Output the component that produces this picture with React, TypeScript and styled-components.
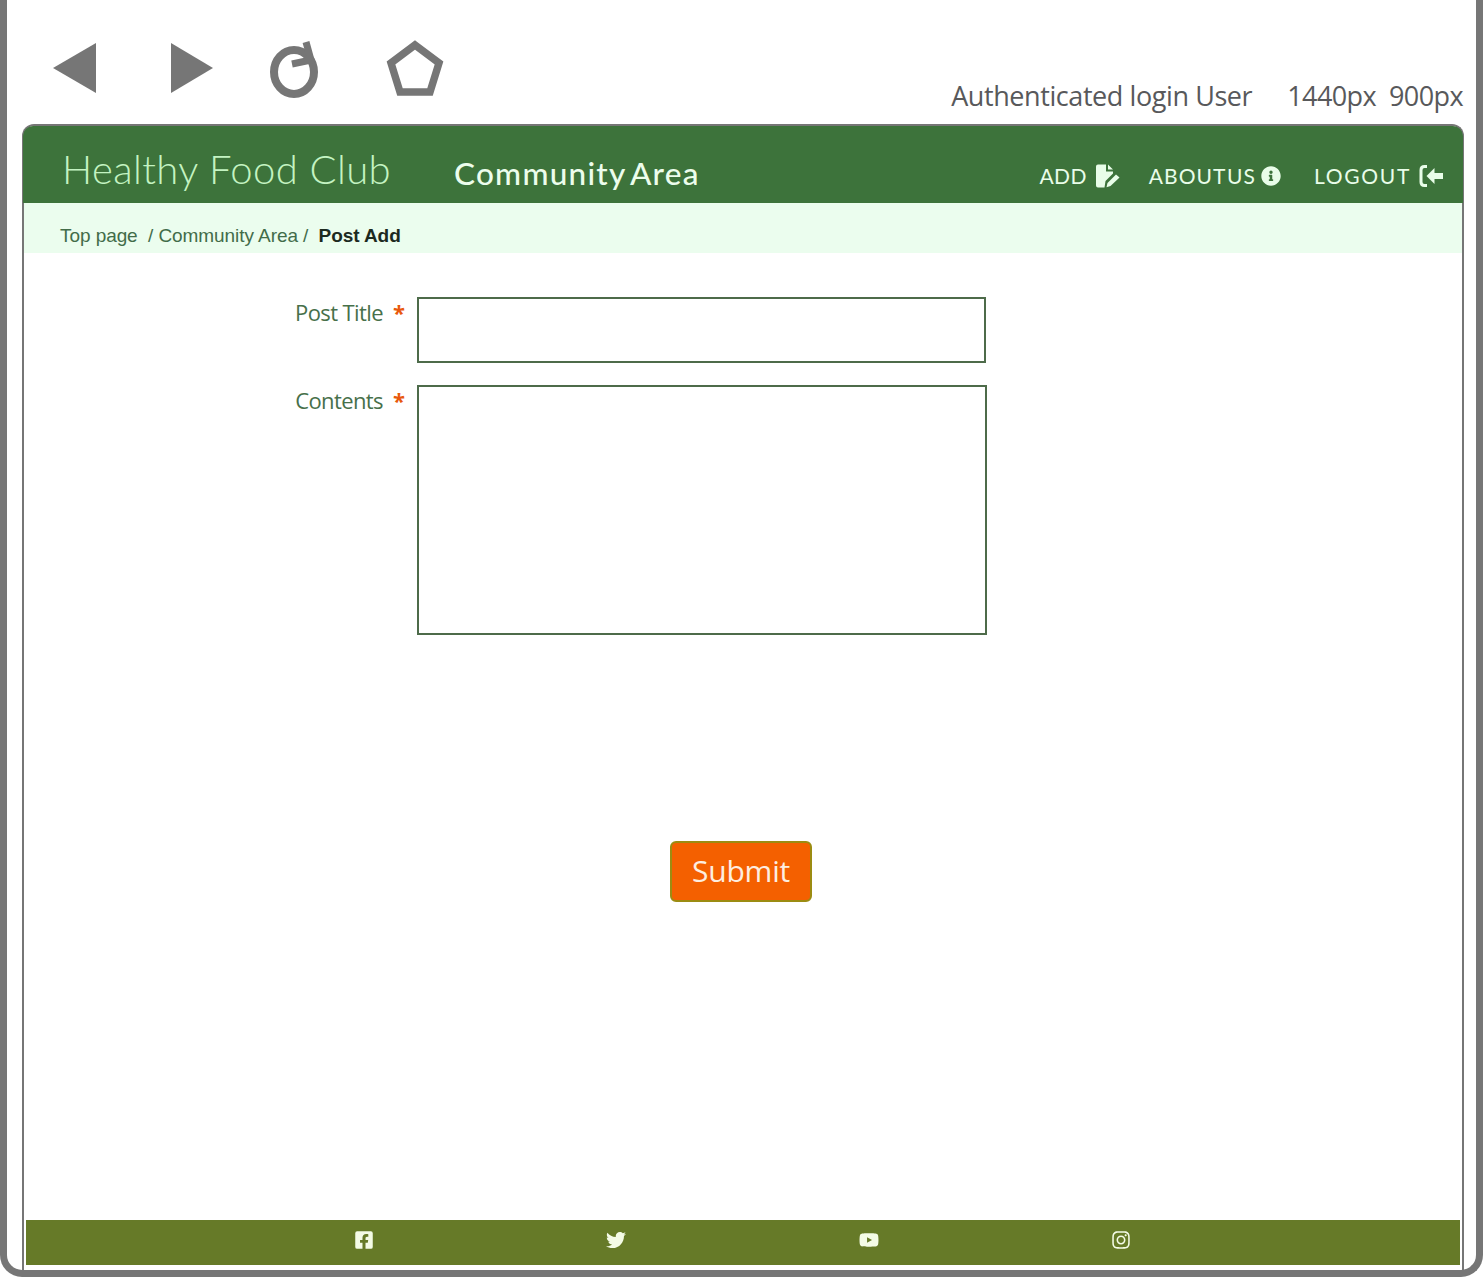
import React from "react";
import styled, { createGlobalStyle } from "styled-components";
import { FaFacebookSquare, FaTwitter, FaYoutube, FaInstagram, FaInfoCircle } from "react-icons/fa";

const Global = createGlobalStyle`
  html, body { margin: 0; padding: 0; background: #fff; }
  * { box-sizing: border-box; }
`;

const Page = styled.div`
  width: 1483px;
  height: 1286px;
  padding-bottom: 9px;
  background: #fff;
`;

const Frame = styled.div`
  height: 1277px;
  display: flex;
  flex-direction: column;
  border: 7px solid #767676;
  border-top: 0;
  border-radius: 0 0 22px 22px;
`;

const Toolbar = styled.div`
  height: 124px;
  display: flex;
  position: relative;
  align-items: flex-start;
`;

const ToolIcons = styled.svg`
  width: 460px;
  height: 110px;
  flex: none;
`;

const Status = styled.div`
  margin-left: auto;
  margin-right: 13px;
  margin-top: 77px;
  display: flex;
  gap: 35px;
  font: 400 27px/38px "Open Sans", sans-serif;
  letter-spacing: -0.42px;
  color: #58595b;
`;

const Sizes = styled.span`
  display: inline-flex;
  gap: 13px;
  letter-spacing: -0.6px;
`;

const Panel = styled.div`
  flex: 1;
  min-height: 0;
  margin: 0 12px 0 15px;
  display: flex;
  flex-direction: column;
  border: 2px solid #767676;
  border-bottom: 0;
  border-radius: 12px 12px 0 0;
`;

const Header = styled.header`
  height: 77px;
  flex: none;
  background: #3d733b;
  border-radius: 10px 10px 0 0;
  margin: 0 -1px;
  display: flex;
  align-items: flex-start;
  padding-left: 39px;
`;

const Brand = styled.div`
  width: 392px;
  margin-top: 18px;
  font: 300 40px/50px "Lato", sans-serif;
  letter-spacing: 0.4px;
  color: #c4f3c2;
  white-space: nowrap;
`;

const Section = styled.div`
  margin-top: 25px;
  font: 500 31.5px/44px "Lato", sans-serif;
  letter-spacing: 1.25px;
  word-spacing: -4px;
  color: #ecfdec;
  white-space: nowrap;
`;

const Nav = styled.nav`
  margin-left: auto;
  margin-right: 20px;
  margin-top: 37px;
  display: flex;
  align-items: center;
`;

const NavItem = styled.a<{ $gap: number; $track: number; $before: number }>`
  display: flex;
  align-items: center;
  gap: ${(p) => p.$gap}px;
  margin-left: ${(p) => p.$before}px;
  font: 400 21px/26px "Lato", sans-serif;
  letter-spacing: ${(p) => p.$track}px;
  word-spacing: -5px;
  color: #e9fde9;
`;

const Crumbs = styled.div`
  height: 50px;
  flex: none;
  padding: 16px 0 0 36px;
  display: flex;
  align-items: center;
  background: #ebfdee;
  font: 400 19px/24px "Liberation Sans", sans-serif;
  letter-spacing: -0.07px;
  color: #426c49;
  white-space: pre;
`;

const Current = styled.strong`
  margin-left: 5px;
  font-weight: 700;
  color: #1c2a1f;
`;

const Main = styled.main`
  flex: 1;
  min-height: 0;
  display: flex;
  flex-direction: column;
  padding: 44px 0 0 393px;
`;

const Field = styled.div`
  display: flex;
  align-items: flex-start;
  margin-bottom: 22px;
`;

const Label = styled.label`
  width: 0;
  display: flex;
  justify-content: flex-end;
  align-items: baseline;
  white-space: nowrap;
  font: 400 22px/30px "Open Sans", sans-serif;
  letter-spacing: -0.6px;
  color: #47704a;
`;

const Star = styled.span`
  margin: 0 12px 0 10px;
  font-size: 22px;
  font-weight: 700;
  letter-spacing: 0;
  color: #e8590c;
`;

const Input = styled.div<{ $w: number; $h: number }>`
  width: ${(p) => p.$w}px;
  height: ${(p) => p.$h}px;
  border: 2px solid #4d6b4a;
  background: #fff;
`;

const Submit = styled.button`
  align-self: flex-start;
  margin: 184px 0 0 253px;
  width: 142px;
  height: 61px;
  padding: 0 0 2px;
  border: 2px solid #9c8c12;
  border-radius: 6px;
  background: #f46000;
  color: #fdeee0;
  font: 400 30px/1 "Open Sans", sans-serif;
  letter-spacing: -0.2px;
`;

const Footer = styled.footer`
  height: 45px;
  flex: none;
  margin: 0 2px 5px;
  padding-left: 212px;
  display: grid;
  grid-template-columns: repeat(4, 252.3px);
  align-items: center;
  justify-items: center;
  background: #667a28;
  color: #f4fbe6;
  font-size: 20px;
  line-height: 0;
`;

const Social = styled.a`
  display: block;
  margin-bottom: 5px;
`;

export default function App() {
  return (
    <Page>
      <Global />
      <Frame>
        <Toolbar>
          <ToolIcons viewBox="7 0 460 110">
            <polygon points="53,68 96,43 96,93" fill="#767676" />
            <polygon points="171,43 171,93 213,68" fill="#767676" />
            <ellipse cx="294" cy="72" rx="20" ry="22" fill="none" stroke="#767676" strokeWidth="8" />
            <polyline points="292,64 311,60 306,42" fill="none" stroke="#767676" strokeWidth="7" />
            <polygon points="415,45 439,63 430,92 400,92 391,63" fill="none" stroke="#767676" strokeWidth="7.5" />
          </ToolIcons>
          <Status>
            <span>Authenticated login User</span>
            <Sizes>
              <span>1440px</span>
              <span>900px</span>
            </Sizes>
          </Status>
        </Toolbar>
        <Panel>
          <Header>
            <Brand>Healthy Food Club</Brand>
            <Section>Community Area</Section>
            <Nav>
              <NavItem $gap={9} $track={0.4} $before={0}>
                ADD
                <svg width="24" height="24" viewBox="0 0 24 24" fill="#e9fde9">
                  <path d="M0 2.500A2 2 0 0 1 2 .5H10v7h7V9.500L9.500 17l-1 6.500H2a2 2 0 0 1-2-2ZM12 .5l5 5h-5Z" />
                  <path d="M20 10.500l3.500 3-9 8.500-4 1.300 1-4.300Z" />
                </svg>
              </NavItem>
              <NavItem $gap={5} $track={1} $before={29}>
                ABOUT US
                <FaInfoCircle size={20} />
              </NavItem>
              <NavItem $gap={8} $track={1.7} $before={33}>
                LOGOUT
                <svg width="24" height="22" viewBox="0 0 24 22">
                  <path d="M8 1.500H5.500Q2 1.500 2 5v12q0 3.500 3.500 3.500H8" fill="none" stroke="#e9fde9" strokeWidth="3" />
                  <path d="M7.500 11l8-8v5H24v6h-8.500v5Z" fill="#e9fde9" />
                </svg>
              </NavItem>
            </Nav>
          </Header>
          <Crumbs>
            {"Top page  / Community Area / "}
            <Current>Post Add</Current>
          </Crumbs>
          <Main>
            <Field>
              <Label>
                Post Title<Star>*</Star>
              </Label>
              <Input $w={569} $h={66} />
            </Field>
            <Field>
              <Label>
                Contents<Star>*</Star>
              </Label>
              <Input $w={570} $h={250} />
            </Field>
            <Submit>Submit</Submit>
          </Main>
          <Footer>
            <Social><FaFacebookSquare /></Social>
            <Social><FaTwitter /></Social>
            <Social><FaYoutube /></Social>
            <Social><FaInstagram /></Social>
          </Footer>
        </Panel>
      </Frame>
    </Page>
  );
}
